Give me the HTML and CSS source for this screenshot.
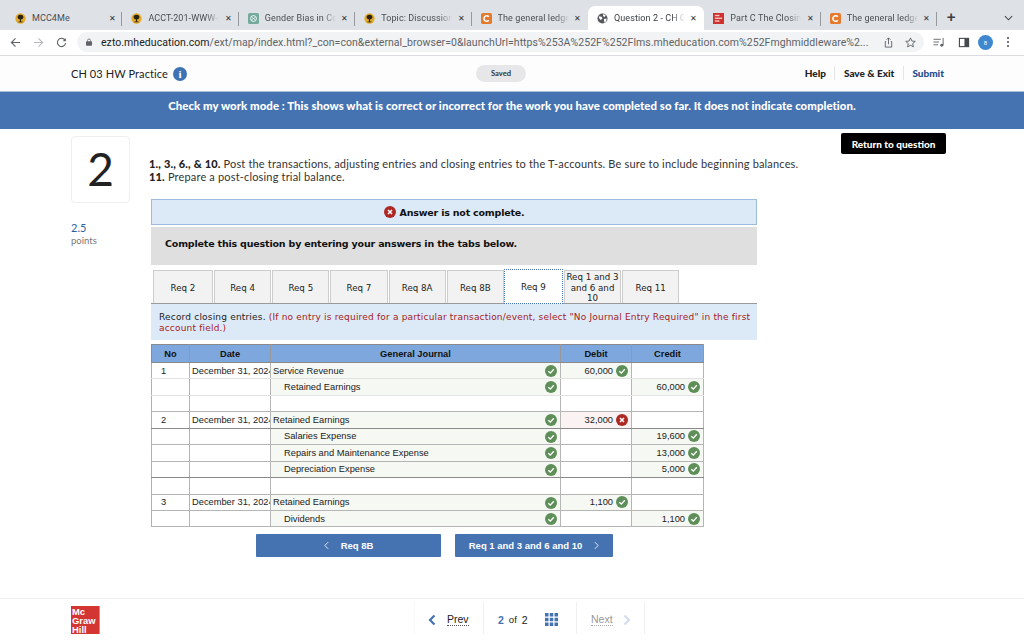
FILE: index.html
```html
<!DOCTYPE html>
<html lang="en">
<head>
<meta charset="utf-8">
<title>Question 2 - CH 03 HW Practice</title>
<link rel="stylesheet" href="styles.css">
</head>
<body>
<svg class="defs" width="0" height="0" aria-hidden="true">
  <symbol id="tree" viewBox="0 0 12 12"><circle cx="6" cy="6" r="5.6" fill="#e2a92b"/><path d="M6 2c2.6 0 3.6 1.700 3 3.400C8.500 6.800 7 6.500 6.600 7v2.200H8L8.500 10h-5l.5-.8h1.400V7C5 6.500 3.500 6.800 3 5.400 2.400 3.700 3.400 2 6 2z" fill="#2b2413"/></symbol>
  <symbol id="ok" viewBox="0 0 12 12"><circle cx="6" cy="6" r="6" fill="#5f8f58"/><path d="M3.300 6.200l2 1.900 3.500-3.900" fill="none" stroke="#fff" stroke-width="1.400"/></symbol>
  <symbol id="bad" viewBox="0 0 12 12"><circle cx="6" cy="6" r="6" fill="#ad2723"/><path d="M4 4l4 4M8 4l-4 4" fill="none" stroke="#fff" stroke-width="1.500"/></symbol>
  <symbol id="cengage" viewBox="0 0 12 12"><rect width="12" height="12" rx="2" fill="#e57a2e"/><path d="M8.500 4.100A3 3 0 1 0 8.500 7.900" fill="none" stroke="#fff" stroke-width="1.700"/></symbol>
</svg>

<div class="tabstrip">
  <div class="tab"><svg class="fav"><use href="#tree"/></svg><span class="tab-title">MCC4Me</span><span class="tab-x">✕</span></div>
  <div class="tab"><svg class="fav"><use href="#tree"/></svg><span class="tab-title">ACCT-201-WWW-Online</span><span class="tab-x">✕</span></div>
  <div class="tab"><svg class="fav" viewBox="0 0 12 12"><rect width="12" height="12" rx="2" fill="#74aa9c"/><circle cx="6" cy="6" r="3.200" fill="none" stroke="#fff"/><path d="M4 4.500l4 3M8 4.500l-4 3" stroke="#fff" stroke-width=".7"/></svg><span class="tab-title">Gender Bias in Coding</span><span class="tab-x">✕</span></div>
  <div class="tab"><svg class="fav"><use href="#tree"/></svg><span class="tab-title">Topic: Discussion Board</span><span class="tab-x">✕</span></div>
  <div class="tab"><svg class="fav"><use href="#cengage"/></svg><span class="tab-title">The general ledger</span><span class="tab-x">✕</span></div>
  <div class="tab tab-active"><svg class="fav" viewBox="0 0 12 12"><circle cx="6" cy="6" r="5.500" fill="#55585c"/><path d="M2 3.500l3 .5 1 2-2 1.500L2.500 6zM7 1l2.500 1.500L8 4.500 6.500 3zM7.500 6.500l3-.5-.5 3-2 1.500z" fill="#fff"/></svg><span class="tab-title">Question 2 - CH 03 HW</span><span class="tab-x">✕</span></div>
  <div class="tab"><svg class="fav" viewBox="0 0 12 12"><rect width="12" height="12" fill="#d0312d"/><rect x="2" y="2" width="5" height="1.500" fill="#f3c9c8"/><rect x="2" y="5" width="8" height="1.500" fill="#f3c9c8"/><rect x="2" y="8" width="5" height="1.500" fill="#f3c9c8"/></svg><span class="tab-title">Part C The Closing</span><span class="tab-x">✕</span></div>
  <div class="tab"><svg class="fav"><use href="#cengage"/></svg><span class="tab-title">The general ledger</span><span class="tab-x">✕</span></div>
  <span class="tab-new">+</span>
  <svg class="tab-menu" viewBox="0 0 10 6"><path d="M1 1l4 4 4-4" fill="none" stroke="#45484c" stroke-width="1.200"/></svg>
</div>

<div class="toolbar">
  <svg class="tool-ic" viewBox="0 0 12 12"><path d="M11 6H2M6 1.500L1.500 6 6 10.500" fill="none" stroke="#5f6368" stroke-width="1.200"/></svg>
  <svg class="tool-ic" viewBox="0 0 12 12"><path d="M1 6h9M6 1.500L10.500 6 6 10.500" fill="none" stroke="#b5b8bc" stroke-width="1.200"/></svg>
  <svg class="tool-ic" viewBox="0 0 12 12"><path d="M10 3.800A4.500 4.500 0 1 0 10.500 6.500" fill="none" stroke="#5f6368" stroke-width="1.200"/><path d="M10.800 1v3.500H7.300z" fill="#5f6368"/></svg>
  <div class="omnibox">
    <svg class="lock" viewBox="0 0 8 10"><rect y="4" width="8" height="6" rx="1" fill="#5f6368"/><path d="M2 4.500V3a2 2 0 0 1 4 0v1.500" fill="none" stroke="#5f6368"/></svg>
    <span class="url"><span class="url-host">ezto.mheducation.com</span>/ext/map/index.html?_con=con&amp;external_browser=0&amp;launchUrl=https%253A%252F%252Flms.mheducation.com%252Fmghmiddleware%2...</span>
    <svg class="omni-ic" viewBox="0 0 12 12"><path d="M3.500 5H2.500v6h7V5H8.500M6 8V1M4 3l2-2 2 2" fill="none" stroke="#5f6368"/></svg>
    <svg class="omni-ic" viewBox="0 0 12 12"><path d="M6 1l1.500 3.400 3.700.4-2.800 2.400.8 3.600L6 9l-3.200 1.800.8-3.600L.8 4.800l3.700-.4z" fill="none" stroke="#5f6368"/></svg>
  </div>
  <div class="tool-right">
    <svg class="tool-ic" viewBox="0 0 12 12"><path d="M0 2.500h8M0 5.500h6M0 8.500h5M10.500 1v8" stroke="#5f6368" fill="none"/><circle cx="9" cy="9" r="1.600" fill="#5f6368"/></svg>
    <svg class="tool-ic" viewBox="0 0 12 12"><rect x="1" y="1.500" width="10" height="9" fill="none" stroke="#45484c" stroke-width="1.200"/><rect x="6.500" y="1.500" width="4.500" height="9" fill="#45484c"/></svg>
    <span class="avatar">8</span>
    <span class="kebab"><i></i><i></i><i></i></span>
  </div>
</div>

<header class="apphead">
  <div class="apphead-left">
    <span class="assign-title">CH 03 HW Practice</span>
    <span class="info">i</span>
  </div>
  <span class="saved">Saved</span>
  <nav class="apphead-nav">
    <span class="nav-item nav-help">Help</span>
    <span class="nav-item nav-save">Save &amp; Exit</span>
    <span class="nav-item nav-submit">Submit</span>
  </nav>
</header>

<div class="banner">Check my work mode : This shows what is correct or incorrect for the work you have completed so far. It does not indicate completion.</div>

<main class="main">
  <aside class="qside">
    <div class="qnum">2</div>
    <div class="pts">2.5</div>
    <div class="pts-label">points</div>
  </aside>

  <section class="qbody">
    <p class="prompt"><b>1., 3., 6., &amp; 10.</b> Post the transactions, adjusting entries and closing entries to the T-accounts. Be sure to include beginning balances.<br><b>11.</b> Prepare a post-closing trial balance.</p>

    <div class="notice"><svg class="ic12"><use href="#bad"/></svg><span>Answer is not complete.</span></div>
    <div class="complete">Complete this question by entering your answers in the tabs below.</div>

    <div class="reqtabs">
      <div class="req req-first">Req 2</div>
      <div class="req">Req 4</div>
      <div class="req">Req 5</div>
      <div class="req">Req 7</div>
      <div class="req">Req 8A</div>
      <div class="req">Req 8B</div>
      <div class="req req-active">Req 9</div>
      <div class="req">Req 1 and 3 and 6 and 10</div>
      <div class="req">Req 11</div>
    </div>

    <div class="instruct">Record closing entries. <span class="red">(If no entry is required for a particular transaction/event, select "No Journal Entry Required" in the first account field.)</span></div>

    <table class="journal">
      <colgroup><col class="c-no"><col class="c-date"><col class="c-acct"><col class="c-debit"><col class="c-credit"></colgroup>
      <thead><tr><th>No</th><th>Date</th><th>General Journal</th><th>Debit</th><th>Credit</th></tr></thead>
      <tbody>
        <tr><td class="no">1</td><td class="date">December 31, 2024</td><td class="acct filled">Service Revenue<svg class="ic12"><use href="#ok"/></svg></td><td class="amt filled">60,000<svg class="ic12"><use href="#ok"/></svg></td><td></td></tr>
        <tr><td></td><td></td><td class="acct filled indent">Retained Earnings<svg class="ic12"><use href="#ok"/></svg></td><td></td><td class="amt filled">60,000<svg class="ic12"><use href="#ok"/></svg></td></tr>
        <tr class="gap"><td></td><td></td><td></td><td></td><td></td></tr>
        <tr><td class="no">2</td><td class="date">December 31, 2024</td><td class="acct filled">Retained Earnings<svg class="ic12"><use href="#ok"/></svg></td><td class="amt wrong">32,000<svg class="ic12"><use href="#bad"/></svg></td><td></td></tr>
        <tr><td></td><td></td><td class="acct filled indent">Salaries Expense<svg class="ic12"><use href="#ok"/></svg></td><td></td><td class="amt filled">19,600<svg class="ic12"><use href="#ok"/></svg></td></tr>
        <tr><td></td><td></td><td class="acct filled indent">Repairs and Maintenance Expense<svg class="ic12"><use href="#ok"/></svg></td><td></td><td class="amt filled">13,000<svg class="ic12"><use href="#ok"/></svg></td></tr>
        <tr><td></td><td></td><td class="acct filled indent">Depreciation Expense<svg class="ic12"><use href="#ok"/></svg></td><td></td><td class="amt filled">5,000<svg class="ic12"><use href="#ok"/></svg></td></tr>
        <tr class="gap"><td></td><td></td><td></td><td></td><td></td></tr>
        <tr><td class="no">3</td><td class="date">December 31, 2024</td><td class="acct filled">Retained Earnings<svg class="ic12"><use href="#ok"/></svg></td><td class="amt filled">1,100<svg class="ic12"><use href="#ok"/></svg></td><td></td></tr>
        <tr><td></td><td></td><td class="acct filled indent">Dividends<svg class="ic12"><use href="#ok"/></svg></td><td></td><td class="amt filled">1,100<svg class="ic12"><use href="#ok"/></svg></td></tr>
      </tbody>
    </table>

    <div class="pager">
      <button class="pg pg-prev"><svg class="chev" viewBox="0 0 6 10"><path d="M5 1L1 5l4 4" fill="none" stroke="#fff"/></svg>Req 8B</button>
      <button class="pg pg-next">Req 1 and 3 and 6 and 10<svg class="chev" viewBox="0 0 6 10"><path d="M1 1l4 4-4 4" fill="none" stroke="#fff"/></svg></button>
    </div>
  </section>

  <aside class="qaction"><button class="return">Return to question</button></aside>
</main>

<footer class="foot">
  <div class="logo">Mc<br>Graw<br>Hill</div>
  <div class="footnav">
    <div class="fn fn-prev"><svg class="fchev" viewBox="0 0 8 12"><path d="M6.500 1.500L2 6l4.500 4.500" fill="none" stroke="#4573b1" stroke-width="2.200"/></svg><span class="linktext">Prev</span></div>
    <div class="fn fn-count"><b class="cur">2</b><span class="of">of</span><span class="tot">2</span>
      <svg class="gridic" viewBox="0 0 13 13"><path d="M0 0h3.500v3.500H0zM4.750 0h3.500v3.500h-3.500zM9.500 0H13v3.500H9.500zM0 4.750h3.500v3.500H0zM4.750 4.750h3.500v3.500h-3.500zM9.500 4.750H13v3.500H9.500zM0 9.500h3.500V13H0zM4.750 9.500h3.500V13h-3.500zM9.500 9.500H13V13H9.500z" fill="#4573b1"/></svg>
    </div>
    <div class="fn fn-next"><span class="linktext muted">Next</span><svg class="fchev" viewBox="0 0 8 12"><path d="M1.500 1.500L6 6l-4.500 4.500" fill="none" stroke="#d3deec" stroke-width="2.200"/></svg></div>
  </div>
</footer>
</body>
</html>
```
FILE: styles.css
```css
* { box-sizing: border-box; }
html, body { margin: 0; padding: 0; }
body { width: 1024px; height: 640px; overflow: hidden; background: #fff; display: flex; flex-direction: column; font-family: "Lato", "Liberation Sans", sans-serif; color: #222; }
.defs { position: absolute; }

/* browser chrome */
.tabstrip { height: 30px; flex: none; background: #dee1e6; display: flex; align-items: flex-end; padding-left: 6px; position: relative; }
.tab { width: 116.4px; height: 24px; flex: none; display: flex; align-items: center; padding: 0 0 0 9px; position: relative; font: 9px "Roboto", sans-serif; color: #4a4d51; }
.tab::after { content: ""; position: absolute; right: 0; top: 6px; height: 14px; width: 1px; background: #95989c; }
.tab:nth-child(5)::after, .tab:nth-child(6)::after { display: none; }
.tab-active { background: #fff; border-radius: 7px 7px 0 0; color: #3c4043; }
.fav { width: 11px; height: 11px; flex: none; margin-right: 6px; }
.tab-title { width: 71px; flex: none; white-space: nowrap; overflow: hidden; letter-spacing: .1px; -webkit-mask-image: linear-gradient(to right, #000 82%, transparent); mask-image: linear-gradient(to right, #000 82%, transparent); }
.tab:first-child .tab-title { -webkit-mask-image: none; mask-image: none; }
.tab-x { margin-left: 4px; font-size: 8px; color: #303236; width: 10px; text-align: center; }
.tab-new { margin-left: 7px; width: 14px; height: 24px; font: 700 15px/22px "Liberation Sans", sans-serif; color: #3c4043; text-align: center; }
.tab-menu { position: absolute; right: 11px; top: 15px; width: 9px; height: 6px; }

.toolbar { height: 26px; flex: none; background: #fff; border-bottom: 1px solid #dadce0; display: flex; align-items: center; padding: 0 0 1px 10px; }
.tool-ic { width: 11px; height: 11px; flex: none; margin-right: 12px; }
.omnibox { width: 847px; height: 20px; margin-left: -2px; flex: none; background: #f1f3f4; border-radius: 10px; display: flex; align-items: center; padding-left: 9px; }
.lock { width: 6px; height: 8px; flex: none; margin-right: 9px; }
.url { width: 771px; flex: none; font: 10.5px "Roboto", sans-serif; color: #5f6368; white-space: nowrap; letter-spacing: .05px; }
.url-host { color: #202124; }
.omni-ic { width: 11px; height: 11px; flex: none; margin-left: 11px; }
.tool-right { display: flex; align-items: center; margin-left: 9px; }
.tool-right .tool-ic { margin-right: 13px; width: 12px; }
.avatar { width: 15px; height: 15px; border-radius: 50%; background: #3f88cf; color: #fff; font: 6px/15px "Roboto", sans-serif; text-align: center; margin-left: -5px; }
.kebab { display: flex; flex-direction: column; gap: 2px; margin-left: 14px; }
.kebab i { display: block; width: 2px; height: 2px; background: #45484c; border-radius: 50%; }

/* assignment header */
.apphead { height: 36px; flex: none; background: #fdfdfd; border-bottom: 1px solid #a9bfd9; display: grid; grid-template-columns: 405px 50px 1fr; align-items: center; padding-left: 71px; }
.apphead-left { display: flex; align-items: center; gap: 5px; }
.assign-title { font-size: 11px; color: #222; letter-spacing: .1px; }
.info { width: 14px; height: 14px; border-radius: 50%; background: #3f72b4; color: #fff; font: 700 11px/14px "Liberation Serif", serif; text-align: center; }
.saved { height: 17px; border-radius: 9px; background: #e7e7e9; font-size: 7.5px; line-height: 17px; text-align: center; color: #333; font-weight: 700; }
.apphead-nav { display: flex; align-items: center; justify-self: end; padding: 0 80px 1px 0; }
.nav-item { font-size: 10px; font-weight: 900; color: #222; padding: 0 8.500px; height: 14px; line-height: 14px; border-right: 1px solid #e5e5e5; white-space: nowrap; }
.nav-submit { color: #1d4d8c; border-right: 0; padding-right: 0; }

.banner { height: 37px; flex: none; background: #4573b1; color: #fff; font-size: 11.4px; font-weight: 900; letter-spacing: .05px; text-align: center; line-height: 28px; }

/* main */
.main { flex: none; display: flex; padding-left: 71px; height: 469px; }
.qside { width: 80px; flex: none; padding-top: 7px; }
.qnum { width: 59px; height: 67px; border: 1px solid #efefef; border-radius: 4px; font: 46px/64px "Lato", sans-serif; text-align: center; color: #222; }
.pts { margin-top: 18px; font-size: 11px; line-height: 14px; color: #2f5f9e; }
.pts-label { font-size: 9.5px; line-height: 12px; color: #777; }
.qbody { width: 606px; flex: none; }
.prompt { margin: 28px 0 0 -2px; font-size: 11px; line-height: 13px; color: #333; height: 42px; white-space: nowrap; letter-spacing: .17px; }
.prompt b { font-weight: 900; color: #222; }
.notice { height: 26px; background: #dceaf8; border: 1px solid #9dbbdd; display: flex; align-items: center; justify-content: center; gap: 4px; font: 700 9.5px "DejaVu Sans", sans-serif; color: #111; letter-spacing: -.2px; }
.complete { height: 38px; margin-top: 2px; background: #dfdfdf; padding: 10px 0 0 14px; font: 700 9.5px/13px "DejaVu Sans", sans-serif; color: #111; letter-spacing: -.185px; }
.ic12 { width: 12px; height: 12px; flex: none; }

.reqtabs { display: flex; margin-top: 5px; height: 34px; border-bottom: 1px solid #9a9a9a; padding-left: 2px; gap: 1px; }
.req { width: 57.2px; height: 33px; flex: none; background: #f2f2f2; border: 1px solid #cdcdcd; border-bottom: 0; display: flex; align-items: center; justify-content: center; text-align: center; font: 8.7px/10.500px "DejaVu Sans", sans-serif; color: #222; padding: 2px 1px 0; }
.req-first { width: 60px; }
.req-active { background: #fff; border: 1px dotted #4573b1; height: 35px; margin-top: -1px; margin-left: -1px; position: relative; width: 59px; }
.instruct { height: 36px; background: #dceaf8; padding: 8px 3px 0 8px; font: 9px/11px "DejaVu Sans", sans-serif; color: #222; letter-spacing: .185px; }
.red { color: #a7211c; }

.journal { margin-top: 4px; width: 552px; table-layout: fixed; border-collapse: collapse; font: 9.3px "Liberation Sans", sans-serif; color: #222; }
.c-no { width: 38px; } .c-date { width: 81px; } .c-acct { width: 290px; } .c-debit { width: 71px; } .c-credit { width: 72px; }
.journal th { height: 18px; padding: 0; background: #7ea8dd; border: 1px solid #8a8a8a; border-right-color: #999; font-weight: 700; color: #111; text-align: center; }
.journal td { height: 16.450px; padding: 0; border: 1px solid #b5b5b5; border-left-color: #b0b0b0; white-space: nowrap; overflow: hidden; }
.journal td:nth-child(3), .journal td:nth-child(4) { border-left-color: #8a8a8a; }
.journal tbody tr:nth-child(4) td, .journal tbody tr:nth-child(7) td { border-bottom-color: #8a8a8a; }
.journal tbody tr:nth-child(1) td, .journal tbody tr:nth-child(2) td { border-bottom-color: #e2e2e2; }
.no { padding-left: 9px !important; }
.date { padding-left: 2px !important; }
.acct { position: relative; padding-left: 2px !important; }
.acct .ic12 { position: absolute; right: 3px; top: 2px; }
.indent { padding-left: 13px !important; }
.filled { background: #f6f8f3; }
.wrong { background: #fbf3f3; }
.amt { text-align: right; padding-right: 3px !important; }
.amt .ic12 { margin-left: 3px; vertical-align: -3px; }

.pager { display: flex; margin-top: 7px; padding-left: 105px; gap: 14px; }
.pg { height: 23px; background: #4573b1; border: 0; border-radius: 1px; color: #fff; font: 700 9.5px "Liberation Sans", sans-serif; display: flex; align-items: center; justify-content: center; gap: 12px; padding: 0; }
.pg-prev { width: 185px; }
.pg-next { width: 158px; }
.chev { width: 5px; height: 9px; }

.qaction { flex: none; padding: 4px 0 0 84px; }
.return { display: block; width: 105px; height: 21px; background: #000; border: 0; border-radius: 2px; color: #fff; font: 900 10px "Lato", sans-serif; padding: 0; }

/* footer */
.foot { flex: 1; border-top: 1px solid #efefef; display: flex; padding: 7px 0 0 71px; }
.logo { width: 29px; height: 28px; background: #d33632; border-right: 1px solid #e8817e; color: #fff; font: 700 9.4px/9px "Liberation Sans", sans-serif; padding: 1px 0 0 1px; }
.footnav { display: flex; margin-left: 314px; height: 32px; margin-top: -4px; }
.fn { display: flex; align-items: center; padding-top: 3px; border-right: 1px solid #f0f0f0; font: 10.5px "Liberation Sans", sans-serif; }
.fn-prev { width: 70px; padding-left: 13px; gap: 11px; border-left: 1px solid #f7f7f7; }
.fn-count { width: 93px; padding-left: 14px; }
.fn-next { padding-left: 14px; width: 68px; gap: 10px; }
.fchev { width: 8px; height: 12px; flex: none; }
.linktext { border-bottom: 1px dotted #555; line-height: 11px; color: #222; }
.muted { color: #999; border-bottom-color: #aaa; }
.cur { color: #4573b1; }
.of { margin: 0 5px; font-size: 9.5px; }
.gridic { width: 13px; height: 13px; margin-left: 17px; }
```
